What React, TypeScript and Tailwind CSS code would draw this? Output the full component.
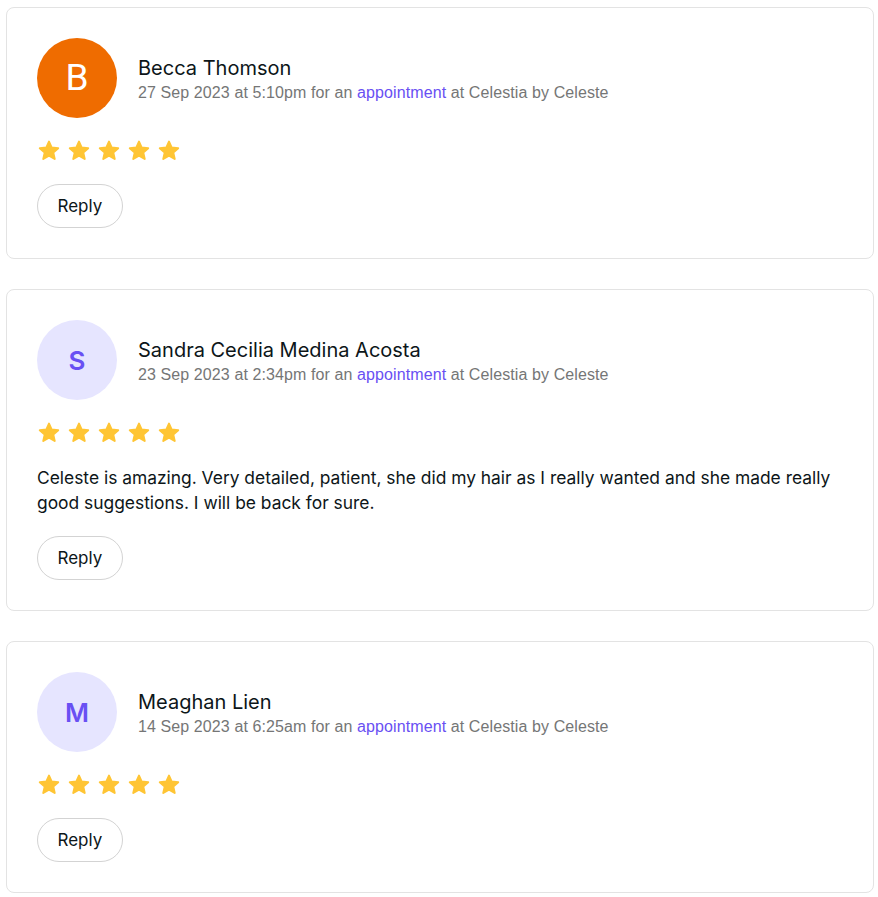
import React from "react";

type Review = {
  initial: string;
  name: string;
  date: string;
  text?: string;
  tone: "orange" | "lavender";
};

const reviews: Review[] = [
  { initial: "B", name: "Becca Thomson", date: "27 Sep 2023 at 5:10pm", tone: "orange" },
  {
    initial: "S",
    name: "Sandra Cecilia Medina Acosta",
    date: "23 Sep 2023 at 2:34pm",
    tone: "lavender",
    text: "Celeste is amazing. Very detailed, patient, she did my hair as I really wanted and she made really good suggestions. I will be back for sure.",
  },
  { initial: "M", name: "Meaghan Lien", date: "14 Sep 2023 at 6:25am", tone: "lavender" },
];

const Star = () => (
  <svg width="24" height="24" viewBox="0 0 24 24" className="shrink-0">
    <polygon
      points="12,2.6 14.7,8.6 21.2,9.2 16.3,13.6 17.7,20 12,16.7 6.3,20 7.7,13.6 2.8,9.2 9.3,8.6"
      fill="#ffc534"
      stroke="#ffc534"
      strokeWidth="2"
      strokeLinejoin="round"
    />
  </svg>
);

const Avatar = ({ initial, tone }: { initial: string; tone: Review["tone"] }) =>
  tone === "orange" ? (
    <div className="w-20 h-20 rounded-full bg-[#ef6c00] flex items-center justify-center shrink-0 text-white text-[37px] font-['Roboto',sans-serif]">
      {initial}
    </div>
  ) : (
    <div className="w-20 h-20 rounded-full bg-[#e6e5ff] flex items-center justify-center shrink-0 text-[#6950f3] text-[26px] font-semibold font-['Inter',sans-serif]">
      {initial}
    </div>
  );

const ReviewCard = ({ review }: { review: Review }) => (
  <div className="border border-[#e3e3e3] rounded-[8px] px-[30px] pt-[30px] pb-[30px] bg-white">
    <div className="flex items-center">
      <Avatar initial={review.initial} tone={review.tone} />
      <div className="ml-[21px] pt-[4px] flex flex-col">
        <div className="text-[20px] leading-[26px] text-[#0d1619] font-['Inter',sans-serif]">
          {review.name}
        </div>
        <div className="text-[16px] leading-[24px] tracking-[0.1px] text-[#757676] font-['Liberation_Sans',Arial,sans-serif]">
          {review.date} for an <span className="text-[#6950f3]">appointment</span> at Celestia by
          Celeste
        </div>
      </div>
    </div>
    <div className="flex gap-[6px] mt-[21px]">
      {[0, 1, 2, 3, 4].map((i) => (
        <Star key={i} />
      ))}
    </div>
    {review.text && (
      <p className="mt-[20px] text-[17.4px] leading-[25px] text-[#0d1619] font-['Inter',sans-serif]">
        {review.text}
      </p>
    )}
    <button className="mt-[21px] h-[44px] px-[19.5px] pt-[2px] rounded-full border border-[#d3d3d3] text-[17px] text-[#0d1619] bg-white font-['Inter',sans-serif]">
      Reply
    </button>
  </div>
);

export default function App() {
  return (
    <div className="min-h-screen bg-white px-[6px] pt-[7px] pb-[4px] w-[878px]">
      <div className="flex flex-col gap-[30px] w-[868px]">
        {reviews.map((r) => (
          <ReviewCard key={r.name} review={r} />
        ))}
      </div>
    </div>
  );
}
